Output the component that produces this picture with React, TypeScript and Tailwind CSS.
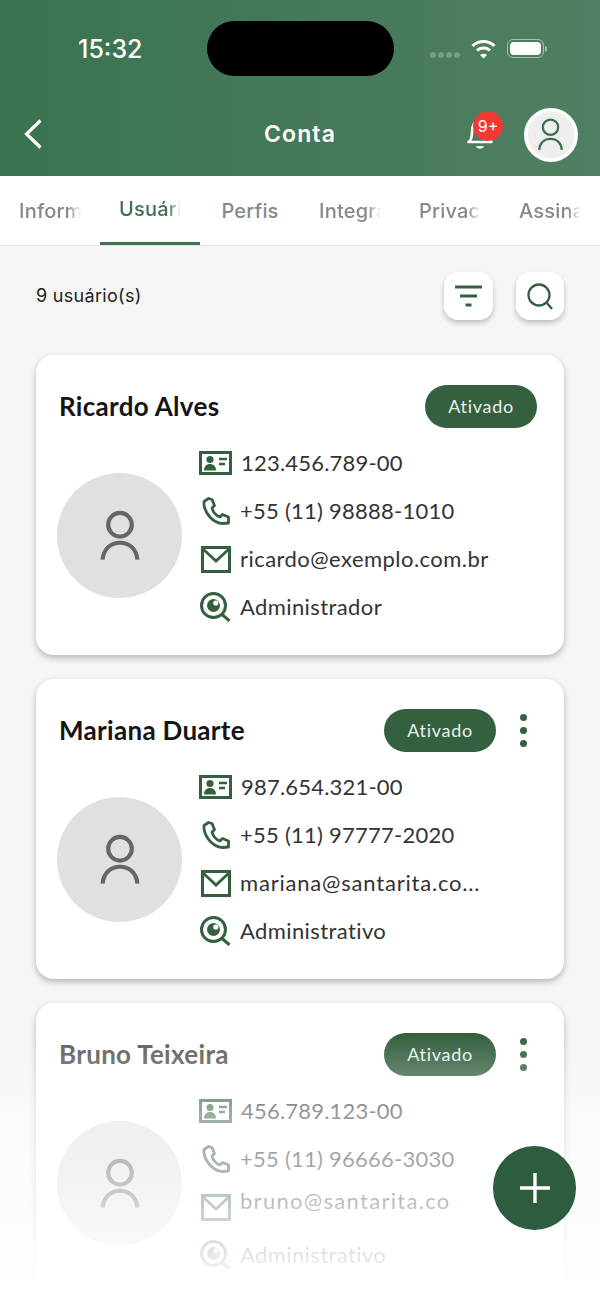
import React from "react";

const G = "#34603f";
const sans = "font-['Lato','Noto_Sans',sans-serif]";

function Person({ size, color, sw = 2 }: { size: number; color: string; sw?: number }) {
  return (
    <svg width={size} height={size} viewBox="0 0 40 48" fill="none" stroke={color} strokeWidth={sw}>
      <circle cx="20" cy="14" r="10.5" />
      <path d="M4.5 45 C5.5 35 12 30 20 30 C28 30 34.5 35 35.5 45" />
    </svg>
  );
}

function IdIcon() {
  return (
    <svg width="33" height="24" viewBox="0 0 33 24" fill="none">
      <rect x="1.5" y="1.5" width="30" height="21" stroke={G} strokeWidth="3" />
      <circle cx="11" cy="8.5" r="3.6" fill={G} />
      <path d="M5 19.5 C5 15 8 13 11 13 C14 13 17 15 17 19.5 Z" fill={G} />
      <path d="M20 8 H28 M20 13 H26" stroke={G} strokeWidth="2.6" />
    </svg>
  );
}
function PhoneIcon() {
  return (
    <svg width="28" height="28" viewBox="0 0 28 28" fill="none">
      <path
        d="M2 4.5 L6.5 1.5 L10 2.5 L12.5 8.5 L10 11 C11 15 14 18.5 18 20 L20.5 17.5 L26.5 20 L26.5 26 L21 26.5 C11 26 3.5 17 2 8 Z"
        stroke={G}
        strokeWidth="2.8"
        strokeLinejoin="round"
      />
    </svg>
  );
}
function MailIcon() {
  return (
    <svg width="30" height="27" viewBox="0 0 30 27" fill="none">
      <rect x="1.5" y="1.5" width="27" height="24" stroke={G} strokeWidth="3" />
      <path d="M2 3 L15 15 L28 3" stroke={G} strokeWidth="2.8" />
    </svg>
  );
}
function EyeIcon() {
  return (
    <svg width="31" height="30" viewBox="0 0 31 30" fill="none">
      <circle cx="13.5" cy="13.5" r="12" stroke={G} strokeWidth="3" />
      <circle cx="13.5" cy="13.5" r="6.5" fill={G} />
      <circle cx="15.8" cy="11" r="2.6" fill="#fff" />
      <path d="M21.5 22 L29.5 29" stroke={G} strokeWidth="3" />
    </svg>
  );
}

function Row({ icon, text, textClass }: { icon: React.ReactNode; text: string; textClass: string }) {
  return (
    <div className="flex h-[48px] items-center">
      <div className="flex w-[33px] shrink-0 justify-center">{icon}</div>
      <span className={`whitespace-nowrap text-[22px] leading-[30px] text-[#333] ${textClass}`}>{text}</span>
    </div>
  );
}

function Card({
  name,
  doc,
  phone,
  mail,
  role,
  menu,
  third,
  mailClass,
}: {
  name: string;
  doc: string;
  phone: string;
  mail: string;
  role: string;
  menu?: boolean;
  third?: boolean;
  mailClass: string;
}) {
  return (
    <section className="h-[300px] shrink-0 rounded-[18px] bg-white shadow-[0_3px_6px_rgba(0,0,0,0.25)]">
      <div className={`flex h-[103px] items-center justify-between pl-[23px] ${menu ? "pr-[37px]" : "pr-[27px]"}`}>
        <h2 className={`mb-[2px] text-[26px] font-bold leading-none tracking-[0.3px] ${third ? "text-[#5c5c5c]" : "text-[#151515]"}`}>{name}</h2>
        <div className="flex items-center">
          <span className="flex h-[43px] w-[112px] items-center justify-center rounded-full bg-[#34603f] text-[18px] tracking-[0.7px] text-[#e9f0eb]">
            Ativado
          </span>
          {menu && (
            <div className="ml-[24px] flex flex-col gap-[6px]">
              <i className="block h-[7px] w-[7px] rounded-full bg-[#34603f]" />
              <i className="block h-[7px] w-[7px] rounded-full bg-[#34603f]" />
              <i className="block h-[7px] w-[7px] rounded-full bg-[#34603f]" />
            </div>
          )}
        </div>
      </div>
      <div className="flex pl-[21px]">
        <div className="mt-[15px] flex h-[125px] w-[125px] shrink-0 items-center justify-center rounded-full bg-[#e0e0e0]">
          <Person size={54} color="#666" sw={3.7} />
        </div>
        <div className="-mt-[19px] ml-[17px] min-w-0">
          <Row icon={<IdIcon />} text={doc} textClass="ml-[9px] tracking-[0.2px]" />
          <Row icon={<PhoneIcon />} text={phone} textClass="ml-[8px] tracking-[0.25px]" />
          <Row icon={<MailIcon />} text={mail} textClass={`ml-[8px] ${mailClass}`} />
          <Row icon={<EyeIcon />} text={role} textClass="ml-[8px] tracking-[0.4px]" />
        </div>
      </div>
    </section>
  );
}

const tabs = ["Informações", "Usuários", "Perfis", "Integrações", "Privacidade", "Assinatura"];

export default function App() {
  return (
    <div className={`relative flex h-[1304px] w-[600px] flex-col overflow-hidden bg-[#f5f5f5] ${sans}`}>
      <header className="h-[176px] shrink-0 bg-gradient-to-r from-[#3a7350] to-[#4f7f62]">
        <div className="flex h-[96px] items-start">
          <span className="ml-[78px] mt-[34px] font-['Inter',sans-serif] text-[25px] font-medium leading-[30px] text-white">15:32</span>
          <div className="ml-[64px] mt-[21px] h-[55px] w-[187px] rounded-full bg-black" />
          <div className="ml-[36px] mt-[39px] flex items-start">
            <div className="mt-[13px] flex gap-[2px]">
              {[0, 1, 2, 3].map((i) => (
                <i key={i} className="block h-[6px] w-[6px] rounded-full bg-white/25" />
              ))}
            </div>
            <svg className="ml-[11px]" width="25" height="20" viewBox="0 0 25 20" fill="none">
              <path d="M1.5 7 C8 1 17 1 23.5 7" stroke="#fff" strokeWidth="3" />
              <path d="M6 11.5 C9.5 8 15.5 8 19 11.5" stroke="#fff" strokeWidth="3" />
              <path d="M9 16 L12.5 19.5 L16 16 C14 14.3 11 14.3 9 16 Z" fill="#fff" />
            </svg>
            <div className="ml-[11px] flex items-center">
              <div className="h-[19px] w-[37px] rounded-[6px] border border-white/50 p-[2px]">
                <div className="h-full w-full rounded-[4px] bg-white" />
              </div>
              <div className="ml-[1px] h-[6px] w-[2px] rounded-r-full bg-white/50" />
            </div>
          </div>
        </div>
        <div className="flex h-[80px] items-center">
          <svg className="ml-[22px] mb-[4px]" width="22" height="32" viewBox="0 0 22 32" fill="none">
            <path d="M18.5 2.5 L4.5 16 L18.5 29.5" stroke="#fff" strokeWidth="3.2" />
          </svg>
          <h1 className="ml-[220px] mb-[3px] font-['Inter',sans-serif] text-[23px] font-semibold tracking-[1.1px] text-white">Conta</h1>
          <div className="relative ml-[131px] mb-[4px] h-[34px] w-[30px]">
            <svg width="30" height="34" viewBox="0 0 30 34" fill="none">
              <path d="M1.5 25 C3.5 24 5 22 5 15 C5 8 8 3 13 3 C18 3 21 8 21 15 C21 22 22.5 24 24.5 25 Z" stroke="#fff" strokeWidth="2.6" strokeLinejoin="round" />
              <path d="M9 29 C10 32.5 16 32.5 17 29 Z" fill="#fff" />
            </svg>
            <span className="absolute -right-[6px] -top-[6px] flex h-[30px] w-[30px] items-center justify-center rounded-full bg-[#f03a35] font-['Inter',sans-serif] text-[16px] leading-none text-white">
              9+
            </span>
          </div>
          <div className="ml-[27px] mb-[3px] flex h-[54px] w-[54px] items-center justify-center rounded-full border-[3px] border-white bg-[#eeeeee] outline outline-1 -outline-offset-4 outline-white/70">
            <Person size={35} color="#3f6f51" sw={3.2} />
          </div>
        </div>
      </header>

      <nav className="flex h-[70px] shrink-0 border-b border-[#e6e6e6] bg-white">
        {tabs.map((t, i) => (
          <div key={t} className={`relative flex w-[100px] shrink-0 items-center justify-center ${i === 1 ? "border-b-[3px] border-[#3f6f51]" : ""}`}>
            <span
              className={`block max-w-[62px] overflow-hidden whitespace-nowrap font-['Inter',sans-serif] text-[20px] font-medium tracking-[0.2px] ${
                t === "Perfis" ? "" : "[mask-image:linear-gradient(to_right,#000_78%,transparent)]"
              } ${i === 1 ? "text-[#3f6f51]" : "text-[#888]"}`}
            >
              {t}
            </span>
          </div>
        ))}
      </nav>

      <div className="flex items-start justify-between px-[36px] pt-[26px]">
        <span className="mt-[10px] font-['Inter',sans-serif] text-[18px] leading-[28px] tracking-[0.3px] text-[#222]">9 usuário(s)</span>
        <div className="flex gap-[23px]">
          <button className="flex h-[48px] w-[49px] items-center justify-center rounded-[14px] bg-white shadow-[0_3px_5px_rgba(0,0,0,0.22)]">
            <svg width="27" height="22" viewBox="0 0 27 22" fill="none" stroke={G} strokeWidth="3">
              <path d="M0 2 H27 M5 11 H22 M10.5 20 H16.5" />
            </svg>
          </button>
          <button className="flex h-[48px] w-[48px] items-center justify-center rounded-[14px] bg-white shadow-[0_3px_5px_rgba(0,0,0,0.22)]">
            <svg width="26" height="27" viewBox="0 0 26 27" fill="none" stroke={G} strokeWidth="2.3">
              <circle cx="12" cy="12" r="10.5" />
              <path d="M19.5 19.5 L25 26" />
            </svg>
          </button>
        </div>
      </div>

      <main className="mt-[35px] flex flex-col gap-[24px] px-[36px]">
        <Card name="Ricardo Alves" doc="123.456.789-00" phone="+55 (11) 98888-1010" mail="ricardo@exemplo.com.br" role="Administrador" mailClass="tracking-[0.45px]" />
        <Card name="Mariana Duarte" doc="987.654.321-00" phone="+55 (11) 97777-2020" mail="mariana@santarita.co..." role="Administrativo" menu mailClass="tracking-[0.8px]" />
        <Card name="Bruno Teixeira" doc="456.789.123-00" phone="+55 (11) 96666-3030" mail="bruno@santarita.co" role="Administrativo" menu third mailClass="-translate-y-[6px] tracking-[1.3px]" />
      </main>

      <div className="pointer-events-none absolute inset-x-0 bottom-0 h-[270px] bg-[linear-gradient(to_bottom,rgba(255,255,255,0)_0%,rgba(255,255,255,0.25)_16%,rgba(255,255,255,0.5)_30%,rgba(255,255,255,0.56)_48%,rgba(255,255,255,0.68)_62%,rgba(255,255,255,0.87)_83%,#fff_93%)]" />

      <button className="absolute left-[493px] top-[1146px] flex h-[84px] w-[83px] items-center justify-center rounded-full bg-[#2d5c3f]">
        <svg width="30" height="30" viewBox="0 0 30 30" stroke="#fff" strokeWidth="3.4">
          <path d="M15 0 V30 M0 15 H30" />
        </svg>
      </button>
    </div>
  );
}
